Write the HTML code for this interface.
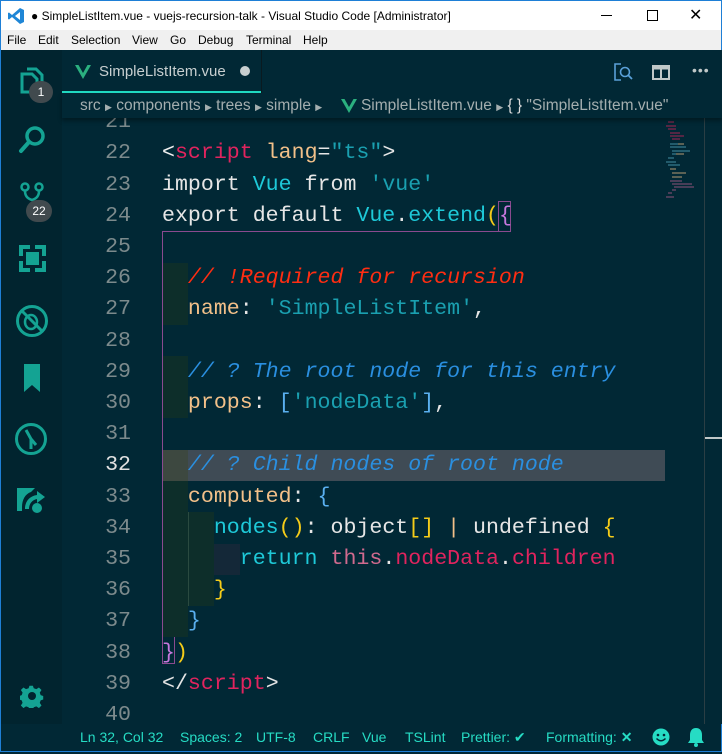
<!DOCTYPE html>
<html><head><meta charset="utf-8"><style>
*{margin:0;padding:0;box-sizing:border-box}
body{width:722px;height:752px;overflow:hidden;background:#012835;font-family:"Liberation Sans",sans-serif;position:relative}
.abs{position:absolute}
#title{left:0;top:0;width:722px;height:30px;background:#fff;border:1px solid #1e7fd6;border-bottom:none;font-size:12px;color:#000}
#menu{left:0;top:30px;width:722px;height:20px;background:#f0f0f0;font-size:12px;color:#000;border-left:1px solid #1e7fd6;border-right:1px solid #1e7fd6}
#menu span{position:absolute;top:3px}
#act{left:0;top:50px;width:62px;height:674px;background:#01242f;border-left:1px solid #1e7fd6}
.code{font-family:"Liberation Mono","DejaVu Sans Mono",monospace;font-size:21.6px;white-space:pre;position:absolute;left:162px;height:31.2px;line-height:31.2px;color:#e6e6e6}
.ln{font-family:"Liberation Mono","DejaVu Sans Mono",monospace;font-size:21.6px;position:absolute;left:80px;width:51px;text-align:right;line-height:31.2px;color:#7c8a8c}
.kw{color:#f0f0f0}.tag{color:#e0245e}.at{color:#f2c089}.str{color:#1aa0b0}.cy{color:#1ec9d8}.y{color:#f5cc19}.p{color:#c678dd}
.cr{color:#ff2d12;font-style:italic}.cb{color:#2a8fe0;font-style:italic}.pk{color:#d06a8e}.b{color:#5ab0f0}
#status{left:0;top:724px;width:722px;height:28px;background:#012835;color:#26dcc4;font-size:14px;border:1px solid #1e7fd6;border-top:none}
#status span{position:absolute;top:5px}
.blk{position:absolute;background:#0d2e2a}
#codewrap{position:absolute;left:0;top:2px;width:722px;height:752px}
</style></head><body>
<div id="title" class="abs">
<svg class="abs" style="left:6px;top:6px" width="18" height="18" viewBox="0 0 18 18"><path d="M13 1 L17 3 V15 L13 17 L5 10 L2 12.5 L1 12 V6 L2 5.5 L5 8 Z M13 5 L8 9 L13 13 Z" fill="#1f86d6"/></svg>
<span class="abs" style="left:30px;top:8px">● SimpleListItem.vue - vuejs-recursion-talk - Visual Studio Code [Administrator]</span>
<span class="abs" style="left:600px;top:14px;width:11px;height:1px;background:#000"></span>
<span class="abs" style="left:646px;top:9px;width:11px;height:11px;border:1px solid #000"></span>
<span class="abs" style="left:688px;top:4px;font-size:16px">✕</span>
</div>
<div id="menu" class="abs">
<span style="left:6px">File</span><span style="left:37px">Edit</span><span style="left:70px">Selection</span><span style="left:131px">View</span><span style="left:169px">Go</span><span style="left:197px">Debug</span><span style="left:245px">Terminal</span><span style="left:302px">Help</span>
</div>
<div id="act" class="abs">
<svg class="abs" style="left:18px;top:16px" width="26" height="28" viewBox="0 0 26 28"><path d="M8 3h9l6 6v11" fill="none" stroke="#14a393" stroke-width="3"/><path d="M3 8h10l5 5v13H3z" fill="none" stroke="#14a393" stroke-width="3"/></svg>
<div class="abs" style="left:28px;top:31px;width:24px;height:22px;border-radius:11px;background:#414a4e;color:#fff;font-size:12px;text-align:center;line-height:22px">1</div>
<svg class="abs" style="left:16px;top:74px" width="30" height="32" viewBox="0 0 30 32"><circle cx="18" cy="12" r="8" fill="none" stroke="#14a393" stroke-width="3.5"/><path d="M12 18 L4 27" stroke="#14a393" stroke-width="4" stroke-linecap="round"/></svg>
<svg class="abs" style="left:18px;top:132px" width="26" height="22" viewBox="0 0 26 22"><circle cx="6" cy="5" r="3.5" fill="none" stroke="#14a393" stroke-width="2.5"/><circle cx="20" cy="5" r="3.5" fill="none" stroke="#14a393" stroke-width="2.5"/><path d="M6 9 Q6 16 13 18 Q20 16 20 9" fill="none" stroke="#14a393" stroke-width="2.5"/></svg>
<div class="abs" style="left:25px;top:150px;width:26px;height:22px;border-radius:11px;background:#414a4e;color:#fff;font-size:12px;text-align:center;line-height:22px">22</div>
<svg class="abs" style="left:18px;top:195px" width="27" height="27" viewBox="0 0 27 27"><path d="M0 0h11v4H4v7H0z M16 0h11v11h-4V4h-7z M0 16h4v7h7v4H0z M23 16h4v11H16v-4h7z" fill="#14a393"/><rect x="7" y="7" width="13" height="13" fill="#14a393"/></svg>
<svg class="abs" style="left:14px;top:254px" width="34" height="34" viewBox="0 0 34 34"><circle cx="17" cy="17" r="14.5" fill="none" stroke="#14a393" stroke-width="3"/><path d="M7 7 L27 27" stroke="#14a393" stroke-width="3"/><ellipse cx="16" cy="18" rx="6" ry="7" fill="none" stroke="#14a393" stroke-width="2.5"/></svg>
<svg class="abs" style="left:23px;top:314px" width="16" height="28" viewBox="0 0 16 28"><path d="M0 0h16v28l-8-7-8 7z" fill="#14a393"/></svg>
<svg class="abs" style="left:13px;top:372px" width="34" height="34" viewBox="0 0 34 34"><circle cx="17" cy="17" r="14.5" fill="none" stroke="#14a393" stroke-width="3"/><path d="M12 8 L17 17 V27 M17 17 L22 23" fill="none" stroke="#14a393" stroke-width="3"/></svg>
<svg class="abs" style="left:14px;top:433px" width="32" height="32" viewBox="0 0 32 32"><path d="M2 5h18l-4 4c-6 2-9 8-9 15v4H2z" fill="#14a393"/><path d="M10 26c0-8 5-13 12-14V8l8 6-8 6v-4c-5 1-8 5-8 10z" fill="#14a393"/><circle cx="22" cy="25" r="5" fill="#14a393"/></svg>
<svg class="abs" style="left:19px;top:634px" width="24" height="24" viewBox="0 0 24 24"><path d="M10 1h4l1 3 3 1 3-2 3 3-2 3 1 3 3 1v4l-3 1-1 3 2 3-3 3-3-2-3 1-1 3h-4l-1-3-3-1-3 2-3-3 2-3-1-3-3-1v-4l3-1 1-3-2-3 3-3 3 2 3-1z" fill="#14a393" transform="scale(.86) translate(1 1)"/><circle cx="12" cy="12" r="4" fill="#01242f"/></svg>
</div>
<div id="codewrap">
<div class="abs" style="left:162px;top:448px;width:503px;height:31px;background:#3f4b55"></div>
<div class="abs" style="left:162px;top:448px;width:26px;height:31px;background:#3d4840"></div>
<div class="blk" style="left:163px;top:261px;width:25px;height:62px"></div>
<div class="blk" style="left:163px;top:354px;width:25px;height:62px"></div>
<div class="blk" style="left:163px;top:479px;width:25px;height:156px"></div>
<div class="blk" style="left:188px;top:510px;width:26px;height:94px"></div>
<div class="abs" style="left:214px;top:542px;width:26px;height:31px;background:#142838"></div>
<div class="abs" style="left:162px;top:229px;width:1px;height:433px;background:#8a4a8f"></div>
<div class="abs" style="left:162px;top:229px;width:336px;height:1px;background:#8a4a8f"></div>
<div class="abs" style="left:498px;top:199px;width:13px;height:31px;border:1px solid #8a4a8f"></div>
<div class="abs" style="left:162px;top:635px;width:13px;height:27px;border:1px solid #8a4a8f;border-top:none"></div>
<div class="abs" style="left:188px;top:510px;width:1px;height:94px;background:#2a4a40"></div>
<div class="ln" style="top:105px">21</div><div class="ln" style="top:136.4px">22</div><div class="ln" style="top:167.6px">23</div><div class="ln" style="top:198.8px">24</div><div class="ln" style="top:230px">25</div><div class="ln" style="top:261.2px">26</div><div class="ln" style="top:292.4px">27</div><div class="ln" style="top:323.6px">28</div><div class="ln" style="top:354.8px">29</div><div class="ln" style="top:386px">30</div><div class="ln" style="top:417.2px">31</div><div class="ln" style="top:448.4px;color:#e0e0e0">32</div><div class="ln" style="top:479.6px">33</div><div class="ln" style="top:510.8px">34</div><div class="ln" style="top:542px">35</div><div class="ln" style="top:573.2px">36</div><div class="ln" style="top:604.4px">37</div><div class="ln" style="top:635.6px">38</div><div class="ln" style="top:666.8px">39</div><div class="ln" style="top:698px">40</div>
<div class="code" style="top:136.4px"><span class="kw">&lt;</span><span class="tag">script</span> <span class="at">lang</span>=<span class="str">"ts"</span>&gt;</div>
<div class="code" style="top:167.6px">import <span class="cy">Vue</span> from <span class="str">'vue'</span></div>
<div class="code" style="top:198.8px">export default <span class="cy">Vue</span>.<span class="cy">extend</span><span class="y">(</span><span class="p">{</span></div>
<div class="code" style="top:261.2px">  <span class="cr">// !Required for recursion</span></div>
<div class="code" style="top:292.4px">  <span class="at">name</span>: <span class="str">'SimpleListItem'</span>,</div>
<div class="code" style="top:354.8px">  <span class="cb">// ? The root node for this entry</span></div>
<div class="code" style="top:386px">  <span class="at">props</span>: <span class="b">[</span><span class="str">'nodeData'</span><span class="b">]</span>,</div>
<div class="code" style="top:448.4px">  <span class="cb">// ? Child nodes of root node</span></div>
<div class="code" style="top:479.6px">  <span class="at">computed</span>: <span class="b">{</span></div>
<div class="code" style="top:510.8px">    <span class="cy">nodes</span><span class="y">()</span>: object<span class="y">[]</span> <span class="at">|</span> undefined <span class="y">{</span></div>
<div class="code" style="top:542px">      <span class="cy">return</span> <span class="pk">this</span>.<span class="tag">nodeData</span>.<span class="tag">children</span></div>
<div class="code" style="top:573.2px">    <span class="y">}</span></div>
<div class="code" style="top:604.4px">  <span class="b">}</span></div>
<div class="code" style="top:635.6px"><span class="p">}</span><span class="y">)</span></div>
<div class="code" style="top:666.8px">&lt;/<span class="tag">script</span>&gt;</div>
</div>
<!-- tab -->
<div class="abs" style="left:62px;top:50px;width:660px;height:43px;background:#012835;z-index:3"></div>
<div class="abs" style="left:62px;top:50px;width:200px;height:43px;border-right:1px solid #0a1a20;z-index:3"></div>
<div class="abs" style="left:62px;top:91px;width:199px;height:2px;background:#20d8c0;z-index:3"></div>
<svg class="abs" style="left:75px;top:65px;z-index:3" width="16" height="14" viewBox="0 0 16 14"><path d="M0 0h3.5L8 8 12.5 0H16L8 14z" fill="#2bb07f"/></svg>
<span class="abs" style="left:99px;top:63px;font-size:15px;color:#c8cfd0;z-index:3">SimpleListItem.vue</span>
<span class="abs" style="left:240px;top:66px;width:10px;height:10px;border-radius:5px;background:#c8cfd0;z-index:3"></span>
<svg class="abs" style="left:613px;top:63px;z-index:3" width="20" height="19" viewBox="0 0 20 19"><path d="M8 1H2v16h6" fill="none" stroke="#5aa0d8" stroke-width="1.6"/><circle cx="12" cy="9" r="4.5" fill="none" stroke="#5aa0d8" stroke-width="1.6"/><path d="M15 12l4 4" stroke="#5aa0d8" stroke-width="1.8"/></svg>
<svg class="abs" style="left:652px;top:65px;z-index:3" width="18" height="15" viewBox="0 0 18 15"><rect x="1" y="1" width="16" height="13" fill="none" stroke="#c0c8c8" stroke-width="2"/><path d="M9 1v13" stroke="#c0c8c8" stroke-width="2"/><path d="M1 3h16" stroke="#c0c8c8" stroke-width="3"/></svg>
<span class="abs" style="left:692px;top:62px;font-size:14px;color:#c0c8c8;letter-spacing:1px;z-index:3">•••</span>
<!-- breadcrumbs -->
<div class="abs" style="left:62px;top:93px;width:660px;height:25px;background:#012835;box-shadow:0 3px 4px rgba(0,0,0,.35);z-index:2;font-size:15.5px;color:#a4aeaf">
<span class="abs" style="left:18px;top:4px;white-space:pre">src <span style="font-size:9px">▶</span> components <span style="font-size:9px">▶</span> trees <span style="font-size:9px">▶</span> simple <span style="font-size:9px">▶</span>         SimpleListItem.vue <span style="font-size:9px">▶</span> <b style="font-weight:normal;color:#ddd">{ }</b> "SimpleListItem.vue"</span>
<svg class="abs" style="left:279px;top:6px" width="16" height="14" viewBox="0 0 16 14"><path d="M0 0h3.5L8 8 12.5 0H16L8 14z" fill="#2bb07f"/></svg>
</div>
<!-- minimap -->
<svg class="abs" style="left:664px;top:120px" width="40" height="80" viewBox="0 0 40 80" opacity="0.75">
<g stroke-width="1">
<path d="M4 2h6M2 6h10M4 9h8M6 13h10M6 16h14M8 19h8" stroke="#e0245e"/>
<path d="M6 24h12M6 27h16M8 31h18M8 34h10M4 38h6M2 42h10M4 45h12" stroke="#5ab0c8"/>
<path d="M14 24h6M12 34h8M6 49h6M8 53h14M8 57h10" stroke="#f2c089"/>
<path d="M6 61h12M8 64h20M10 67h20M8 70h4M4 73h4M2 77h8" stroke="#c06090"/>
</g></svg>
<div class="abs" style="left:704px;top:118px;width:1px;height:606px;background:#2a3e44"></div>
<div class="abs" style="left:705px;top:437px;width:17px;height:2px;background:#c0c8c8"></div>
<div id="status" class="abs">
<span style="left:79px">Ln 32, Col 32</span><span style="left:179px">Spaces: 2</span><span style="left:255px">UTF-8</span><span style="left:312px">CRLF</span><span style="left:361px">Vue</span><span style="left:404px">TSLint</span><span style="left:460px">Prettier: ✔</span><span style="left:545px">Formatting: <b>✕</b></span>
<svg class="abs" style="left:651px;top:4px" width="18" height="18" viewBox="0 0 18 18"><circle cx="9" cy="9" r="8.5" fill="#26dcc4"/><circle cx="6" cy="7" r="1.3" fill="#012835"/><circle cx="12" cy="7" r="1.3" fill="#012835"/><path d="M4.5 10.5q4.5 4.5 9 0" stroke="#012835" stroke-width="1.5" fill="none"/></svg>
<svg class="abs" style="left:686px;top:3px" width="18" height="20" viewBox="0 0 18 20"><path d="M9 1c-4 0-6 3-6 7v5l-2 3h16l-2-3V8c0-4-2-7-6-7z" fill="#26dcc4"/><circle cx="9" cy="18" r="2" fill="#26dcc4"/></svg>
</div>
</body></html>
